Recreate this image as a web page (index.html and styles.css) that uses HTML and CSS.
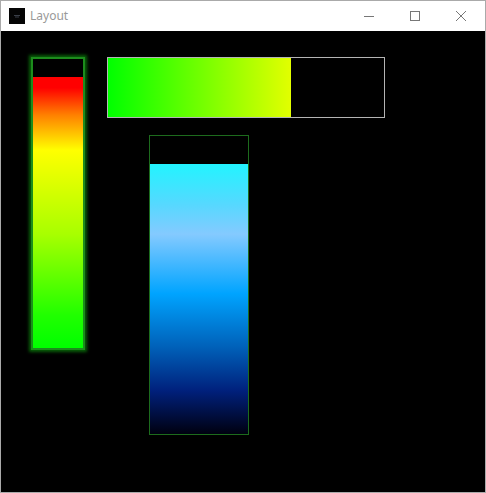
FILE: index.html
```html
<!DOCTYPE html>
<html>
<head>
<meta charset="utf-8">
<title>Layout</title>
<link rel="stylesheet" href="styles.css">
</head>
<body>
<div class="window">
  <div class="titlebar">
    <div class="app-icon">
      <svg width="16" height="16" viewBox="0 0 16 16"><rect width="16" height="16" fill="#050505"/><path d="M5 7.5h6M6 9h4" stroke="#3a3f48" stroke-width="1"/></svg>
    </div>
    <span class="title">Layout</span>
    <div class="controls">
      <span class="ctl"><svg width="12" height="12" viewBox="0 0 12 12"><path d="M1 6.5h10" stroke="#777" stroke-width="1"/></svg></span>
      <span class="ctl"><svg width="12" height="12" viewBox="0 0 12 12"><rect x="1.5" y="1.5" width="9" height="9" fill="none" stroke="#777" stroke-width="1"/></svg></span>
      <span class="ctl"><svg width="12" height="12" viewBox="0 0 12 12"><path d="M1 1L11 11M11 1L1 11" stroke="#777" stroke-width="1"/></svg></span>
    </div>
  </div>
  <div class="content">
    <div class="vbar">
      <div class="vfill" style="height:271px"></div>
    </div>
    <div class="right">
      <div class="hbar">
        <div class="hfill" style="width:183px"></div>
      </div>
      <div class="bbar">
        <div class="bfill" style="height:270px"></div>
      </div>
    </div>
  </div>
</div>
</body>
</html>
```

FILE: styles.css
```css
html, body {
  margin: 0;
  padding: 0;
  background: #000;
}
.window {
  width: 486px;
  height: 493px;
  box-sizing: border-box;
  border: 1px solid #aaaaaa;
  display: flex;
  flex-direction: column;
  overflow: hidden;
}
.titlebar {
  height: 30px;
  flex: none;
  background: #fff;
  display: flex;
  align-items: center;
  font-family: "Noto Sans", "Open Sans", sans-serif;
}
.app-icon {
  width: 16px;
  height: 16px;
  margin-left: 8px;
  display: flex;
}
.title {
  margin-left: 5px;
  font-size: 12px;
  color: #999;
  line-height: 16px;
}
.controls {
  margin-left: auto;
  display: flex;
  gap: 34px;
  margin-right: 18px;
}
.ctl {
  width: 12px;
  height: 12px;
  display: flex;
}
.content {
  flex: 1;
  background: #000;
  display: flex;
  align-items: flex-start;
  padding: 25px 0 0 30px;
}
.vbar {
  width: 50px;
  height: 289px;
  border: 2px solid #1c8c1c;
  box-shadow: 0 0 3px 2px #086008;
  display: flex;
  flex-direction: column;
  justify-content: flex-end;
  margin-top: 1px;
}
.vfill {
  background: linear-gradient(to bottom, #ff0000 0%, #ff0000 4%, #ff8000 14%, #ffff00 27%, #a8ff00 58%, #20ff00 88%, #00ff00 100%);
}
.right {
  margin-left: 22px;
  display: flex;
  flex-direction: column;
  margin-top: 1px;
}
.hbar {
  width: 276px;
  height: 59px;
  border: 1px solid #b4b4b4;
  display: flex;
}
.hfill {
  height: 100%;
  background: linear-gradient(to right, #00ff00, #e2ff00);
}
.bbar {
  margin-top: 17px;
  margin-left: 42px;
  width: 98px;
  height: 298px;
  border: 1px solid #1d6b1d;
  display: flex;
  flex-direction: column;
  justify-content: flex-end;
}
.bfill {
  background: linear-gradient(to bottom, #22f4ff 0%, #56d8ff 15%, #84caff 26%, #00a4ff 48%, #0060b8 68%, #00207c 84%, #000010 100%);
}
```
